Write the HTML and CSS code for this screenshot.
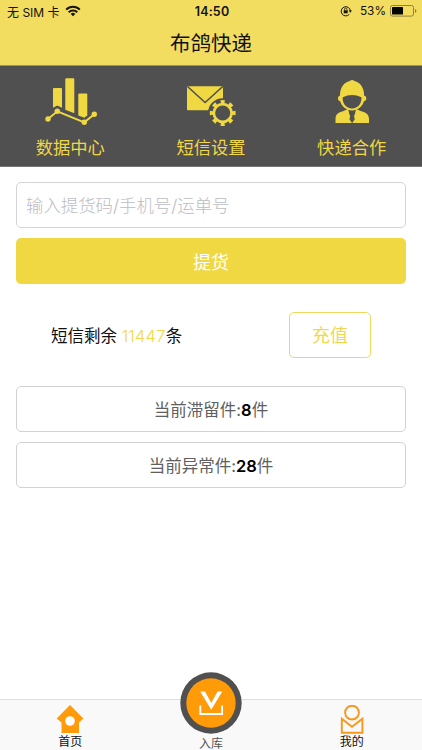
FILE: index.html
```html
<!DOCTYPE html>
<html lang="zh-CN">
<head>
<meta charset="utf-8">
<title>布鸽快递</title>
<link rel="stylesheet" href="styles.css">
</head>
<body>
<div class="app">
  <header class="header">
    <div class="status">
      <div class="carrier"><span>无 SIM 卡</span>
        <svg width="16" height="12" viewBox="0 0 16 12" fill="none" stroke="#15130a" stroke-width="2"><path d="M1.200 4.600a9.600 9.600 0 0 1 13.600 0M3.700 7.300a6.100 6.100 0 0 1 8.600 0"/><path d="M8 11.200 5.700 8.900a3.300 3.300 0 0 1 4.600 0z" fill="#15130a" stroke="none"/></svg>
      </div>
      <time class="clock">14:50</time>
      <div class="power">
        <svg width="12" height="12" viewBox="0 0 12 12" fill="none" stroke="#15130a"><path d="M9.300 9.300A4.600 4.600 0 1 1 10.400 6"/><path d="M8.600 5.500h3.300l-1.600 2.200z" fill="#15130a" stroke="none"/><path d="M3.700 5.300h4v3h-4z" fill="#15130a" stroke="none"/><path d="M4.500 5.500V4.200a1.200 1.200 0 0 1 2.400 0v1.300" stroke-width=".8"/></svg>
        <span>53%</span>
        <svg width="27" height="12" viewBox="0 0 27 12"><rect x=".5" y=".5" width="23" height="10.600" rx="2" fill="none" stroke="#8c8242"/><rect x="2" y="2" width="11" height="7.600" rx=".6" fill="#050500"/><path d="M25 4v4q1.400-.5 1.400-2T25 4" fill="#8c8242"/></svg>
      </div>
    </div>
    <h1 class="title">布鸽快递</h1>
  </header>

  <nav class="features">
    <a class="feature">
      <svg width="60" height="54" viewBox="40 74 60 54" fill="#f0d843"><path d="M53 89q0-1 1-1h7q1 0 1 1v18.800l-4.700-2.200-4.300 2.200zM65.300 79.300q0-1 1-1h7q1 0 1 1V113.300l-9-3.600zM78.300 94.500q0-1 1-1h7q1 0 1 1V115.500l-3 2.300-6-2.300z"/><path d="m48 119 9.300-7.700 27 11 10-8" fill="none" stroke="#f0d843" stroke-width="1.900"/><circle cx="48" cy="119" r="2.700"/><circle cx="57.300" cy="111.300" r="2.700"/><circle cx="84.300" cy="122.300" r="2.700"/><circle cx="94.300" cy="114.300" r="2.700"/></svg>
      <span>数据中心</span>
    </a>
    <a class="feature">
      <svg width="60" height="54" viewBox="181 74 60 54"><rect x="187" y="86.300" width="36" height="24" rx="1" fill="#f0d843"/><path d="m187.500 86.500 17.600 16 17.600-16" fill="none" stroke="#505050" stroke-width="1.600"/><circle cx="222.700" cy="113" r="14.700" fill="#505050"/><circle cx="222.700" cy="113" r="8.900" fill="none" stroke="#f0d843" stroke-width="2.700"/><circle cx="222.700" cy="113" r="11" fill="none" stroke="#f0d843" stroke-width="3.800" pathLength="80" stroke-dasharray="4.600 5.400" stroke-dashoffset="2.300"/></svg>
      <span>短信设置</span>
    </a>
    <a class="feature">
      <svg width="60" height="54" viewBox="321.500 74 60 54" fill="#f0d843"><path d="M339.500 95.500c0-8 4-13 9.700-14.400q2.400-2 4.800 0c5.700 1.400 9.600 6.400 9.600 14.400q2.400.5 2.300 3.200-.2 2.300-2.500 2.600c-1.200 5-5.800 9.200-11.800 9.200s-10.600-4.200-11.900-9.200q-2.200-.3-2.300-2.600 0-2.700 2.100-3.200z"/><path d="M342.200 97.200q9.400-4.300 18.700 0c.6 6.100-3.500 11.200-9.300 11.200s-10-5.100-9.400-11.200z" fill="#505050"/><path d="M335 123v-4c0-4.500 2.800-6.600 7.500-7.700l5-2.300 4.100 14 4.100-14 5 2.300c4.600 1.100 7.800 3.200 7.800 7.700v4z"/><path d="m349.500 111.800 2.100.7 2.100-.7 1.100 1.200-1.500 2.200 1 4-2.700 3.800-2.700-3.800 1-4-1.500-2.200z" fill="#505050"/></svg>
      <span>快递合作</span>
    </a>
  </nav>

  <main class="content">
    <input class="search" type="text" placeholder="输入提货码/手机号/运单号">
    <button class="pickup">提货</button>
    <section class="balance">
      <p>短信剩余 <span class="count">11447</span>条</p>
      <button class="recharge">充值</button>
    </section>
    <div class="stat">当前滞留件:<b>8</b>件</div>
    <div class="stat">当前异常件:<b>28</b>件</div>
  </main>

  <footer class="tabs">
    <a class="tab">
      <svg width="28" height="29" viewBox="0 0 28 29"><path d="M14 0 27.300 13.500 23 17.500V28H5.500V17.500L.7 13.500z" fill="#ff9a08"/><circle cx="14" cy="16" r="4.800" fill="#fff"/></svg>
      <span>首页</span>
    </a>
    <a class="tab tab-store">
      <svg class="store" width="62" height="62" viewBox="0 0 62 62"><circle cx="31" cy="31" r="30.700" fill="#505050"/><circle cx="31" cy="31" r="24.700" fill="#ff9a08"/><path d="M20.200 19.500h4.800L31.200 31l6.300-11.500h4.800L31.200 37.700z" fill="#fff"/><path d="M20.300 33.500v8.500h21.800v-8.500" fill="none" stroke="#fff" stroke-width="1.900"/></svg>
      <span>入库</span>
    </a>
    <a class="tab">
      <svg width="28" height="29" viewBox="0 0 28 29" fill="none" stroke="#f7981d" stroke-width="1.900"><circle cx="14" cy="7.600" r="6.900"/><path d="M3.800 13.700V27.800h20.600V13.700L14 21.800z"/></svg>
      <span>我的</span>
    </a>
  </footer>
</div>
</body>
</html>
```
FILE: styles.css
```css
* { box-sizing: border-box; }

body {
  margin: 0;
  background: #fff;
  color: #111;
  font-family: Inter, "Noto Sans CJK SC", sans-serif;
}

.app {
  display: flex;
  flex-direction: column;
  height: 750px;
}

.header {
  height: 66px;
  background: #f3dd60;
  border-bottom: 1px solid #a3944b;
}

.status {
  display: grid;
  grid-template-columns: 1fr auto 1fr;
  align-items: center;
  height: 22px;
  padding: 0 5px 0 7px;
  font-size: 12px;
}

.carrier, .power {
  display: flex;
  align-items: center;
  gap: 5px;
}

.power { justify-content: flex-end; gap: 4px; }
.power span { margin-left: 4px; font-size: 11.8px; }
.clock { font-weight: 600; font-size: 12.5px; letter-spacing: .2px; }

.title {
  margin: 0;
  line-height: 44px;
  font-size: 20.500px;
  font-weight: 400;
  text-align: center;
}

.features {
  display: grid;
  grid-template-columns: repeat(3, 1fr);
  height: 101px;
  background: #505050;
  border-bottom: 1px solid #777;
}

.feature {
  display: flex;
  flex-direction: column;
  align-items: center;
  padding-top: 8px;
  color: #f0d843;
  font-size: 17.300px;
  line-height: 40px;
}

.feature svg { flex: none; }

.content {
  display: flex;
  flex-direction: column;
  flex: 1;
  padding: 15px 16px 0;
}

.search {
  height: 46px;
  padding: 1px 9px 0;
  border: 1px solid #d4d4d8;
  border-radius: 5px;
  background: #fff;
  font: 300 17.400px Inter, "Noto Sans CJK SC", sans-serif;
}

.search::placeholder { color: #bcbcc6; opacity: 1; }

.pickup {
  height: 46px;
  margin-top: 10px;
  padding: 0;
  border: 0;
  border-radius: 5px;
  background: #f0d843;
  color: #fff;
  font: 400 18px Inter, "Noto Sans CJK SC", sans-serif;
}

.balance {
  display: flex;
  align-items: center;
  justify-content: space-between;
  margin: 28px 35px 28px 35px;
}

.balance p { margin: -1px 0 0; font-size: 16.500px; }
.count { color: #f0d843; font-weight: 300; letter-spacing: .2px; }

.recharge {
  width: 82px;
  height: 46px;
  padding: 0 0 2px;
  border: 1px solid #f0d860;
  border-radius: 5px;
  background: #fff;
  color: #f0d84e;
  font: 400 18px Inter, "Noto Sans CJK SC", sans-serif;
}

.stat {
  height: 46px;
  margin-bottom: 10px;
  border: 1px solid #d2d2d2;
  border-radius: 5px;
  color: #606060;
  font-size: 16.500px;
  line-height: 46px;
  text-align: center;
}

.stat b { color: #000; font-weight: 600; }

.tabs {
  display: grid;
  grid-template-columns: repeat(3, 1fr);
  height: 51px;
  background: #f9f9f9;
  border-top: 1px solid #dedede;
}

.tab {
  display: flex;
  flex-direction: column;
  align-items: center;
  padding-top: 5px;
  font-size: 12px;
  line-height: 15px;
}

.tab svg { flex: none; }
.tab-store { padding-top: 0; color: #555; }
.tab-store .store { margin: -28px 0 2px; }
```
